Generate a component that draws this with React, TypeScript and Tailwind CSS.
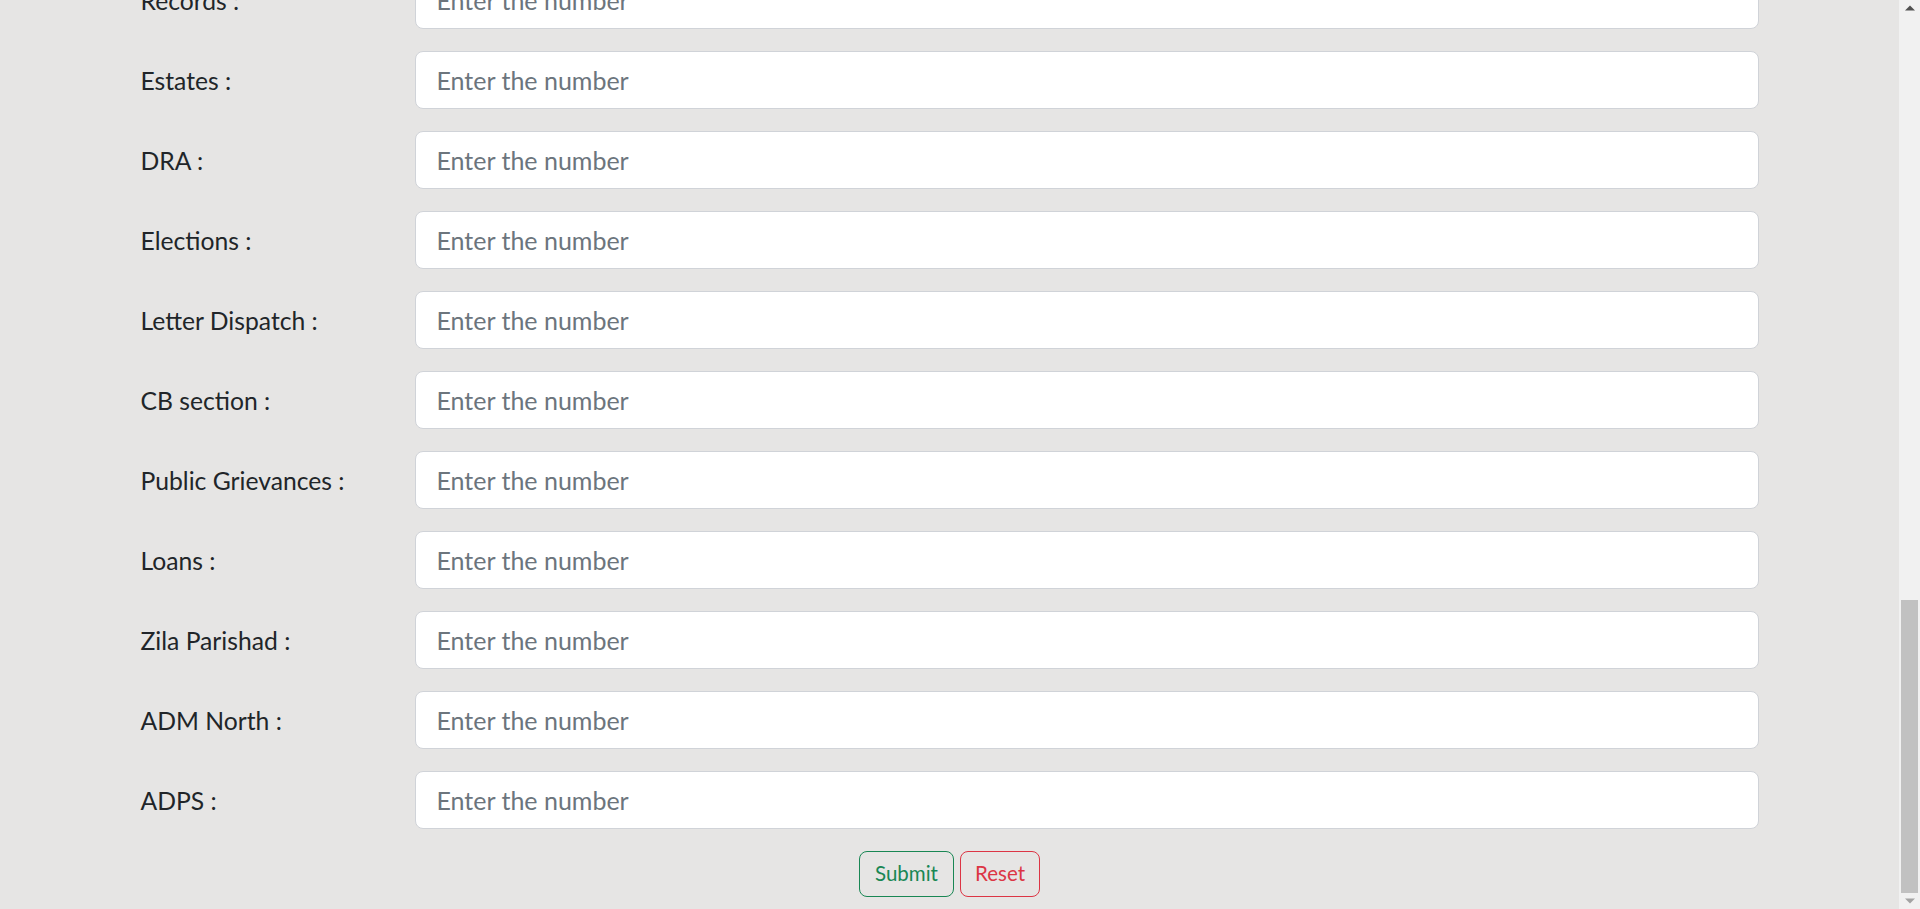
import React from "react";

const labels = [
  "Records :",
  "Estates :",
  "DRA :",
  "Elections :",
  "Letter Dispatch :",
  "CB section :",
  "Public Grievances :",
  "Loans :",
  "Zila Parishad :",
  "ADM North :",
  "ADPS :",
];

export default function App() {
  return (
    <div
      className="flex h-[909px] w-[1920px] overflow-hidden bg-[#e6e5e4]"
      style={{ fontFamily: 'Lato, "Open Sans", sans-serif' }}
    >
      <main className="flex-1 overflow-hidden">
        <form className="-mt-[29.5px] flex flex-col gap-[21.5px] px-[140.5px]">
          {labels.map((l) => (
            <div key={l} className="flex h-[58.5px] items-center">
              <label className="w-[274px] shrink-0 pt-[1px] text-[24.7px] text-[#212529]">{l}</label>
              <input
                type="text"
                placeholder="Enter the number"
                className="h-full flex-1 rounded-[8px] border border-[#d0d3d8] bg-white px-[21px] text-[25px] text-[#212529] outline-none placeholder:text-[#6c757d]"
              />
            </div>
          ))}
          <div className="flex justify-center gap-[6.5px]">
            <button
              type="button"
              className="h-[46px] w-[94.5px] rounded-[8px] border border-[#198754] text-[20.5px] text-[#198754]"
            >
              Submit
            </button>
            <button
              type="button"
              className="h-[46px] w-[79.5px] rounded-[8px] border border-[#dc3545] text-[20.5px] text-[#dc3545]"
            >
              Reset
            </button>
          </div>
        </form>
      </main>
      <div className="flex w-[21px] shrink-0 flex-col bg-[#f1f1f1]">
        <div className="flex h-[19px] items-center justify-center">
          <svg width="10" height="6" viewBox="0 0 10 6">
            <polygon points="0,5.5 5,0.5 10,5.5" fill="#505050" />
          </svg>
        </div>
        <div className="flex-1 pl-[2px] pr-[2px] pt-[583px]">
          <div className="h-[293px] bg-[#c1c1c1]" />
        </div>
        <div className="flex h-[19px] items-center justify-center">
          <svg width="10" height="6" viewBox="0 0 10 6">
            <polygon points="0,0.5 5,5.5 10,0.5" fill="#a3a3a3" />
          </svg>
        </div>
      </div>
    </div>
  );
}
